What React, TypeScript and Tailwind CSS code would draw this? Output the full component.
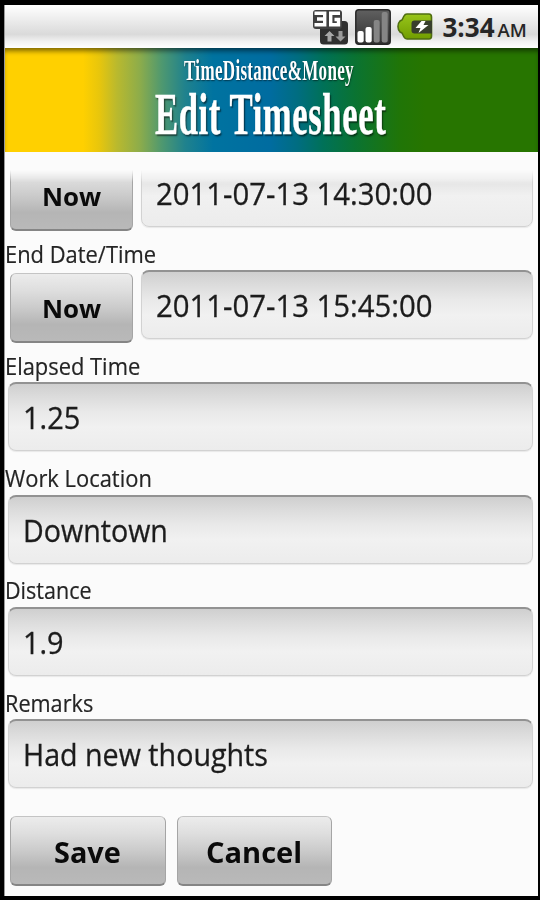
import { useLayoutEffect, useRef, useState } from "react";

/** Text squeezed horizontally so that it takes exactly `width` pixels. */
function Fit({ text, width, className = "" }: { text: string; width: number; className?: string }) {
  const ref = useRef<HTMLSpanElement>(null);
  const [scale, setScale] = useState(1);
  useLayoutEffect(() => {
    const el = ref.current;
    if (el) setScale(width / el.offsetWidth);
  }, [text, width]);
  return (
    <span className="block text-left" style={{ width }}>
      <span
        ref={ref}
        className={`inline-block origin-left whitespace-nowrap align-top ${className}`}
        style={{ transform: `scaleX(${scale})` }}
      >
        {text}
      </span>
    </span>
  );
}

function Field({ value, width }: { value: string; width: number }) {
  return (
    <div className="h-[69px] flex-1 rounded-[8px] border border-t-2 border-[#d2d2d2] border-t-[#929292] bg-[linear-gradient(#cfcfcf,#dcdcdc_20%,#e9e9e9_42%,#f1f1f1_65%,#ececec)] pl-[13.5px] shadow-[0_1px_1px_#e8e8e8]">
      <Fit text={value} width={width} className="text-[31px] leading-[67px] text-[#1c1c1c] [-webkit-text-stroke:0.3px_#1c1c1c]" />
    </div>
  );
}

function Button({ label, width, big = false }: { label: string; width: number; big?: boolean }) {
  return (
    <button
      className={`flex h-[70.5px] shrink-0 justify-center rounded-[6px] border border-b-2 border-[#a5a5a5] border-t-[#c4c4c4] border-b-[#858585] bg-[linear-gradient(#ececec,#dedede_25%,#cbcbcb_50%,#b5b5b5_75%,#b9b9b9)] font-bold text-[#0a0a0a] ${
        big ? "w-[155.5px]" : "w-[122.5px]"
      }`}
    >
      <Fit text={label} width={width} className={big ? "text-[28px] leading-[70px]" : "text-[25px] leading-[68px]"} />
    </button>
  );
}

function Label({ text, width }: { text: string; width: number }) {
  return (
    <div className="h-[31.5px]">
      <Fit text={text} width={width} className="text-[24px] leading-[30px] text-[#242424] [-webkit-text-stroke:0.2px_#242424]" />
    </div>
  );
}

function NetworkIcon() {
  return (
    <svg width="36" height="38" viewBox="0 0 36 38">
      <rect x="7" y="12" width="28" height="23.500" rx="3.500" fill="#303030" />
      <rect x="0" y="1" width="29" height="19" rx="3" fill="#404040" />
      <path d="M1.500 4.200H11.700V15.800H1.500M4 10H11" fill="none" stroke="#fff" strokeWidth="3.400" />
      <path d="M27 4.200H17.700V15.800H25.500V10.500H21.500" fill="none" stroke="#fff" strokeWidth="3.400" />
      <path d="M16.500 22l5 5h-3v5.500h-4V27h-3z" fill="#a8a8a8" />
      <path d="M27.500 32.500l5-5h-3V22h-4v5.500h-3z" fill="#989898" />
    </svg>
  );
}

function SignalIcon() {
  return (
    <svg width="36" height="36" viewBox="0 0 36 36">
      <defs>
        <linearGradient id="sig" x1="0" y1="0" x2="0" y2="1">
          <stop offset="0" stopColor="#606060" />
          <stop offset="1" stopColor="#303030" />
        </linearGradient>
      </defs>
      <rect x=".8" y=".8" width="34.400" height="34.400" rx="3" fill="url(#sig)" stroke="#292929" strokeWidth="1.500" />
      <rect x="2.500" y="22" width="6.200" height="11.500" rx="2" fill="#fff" />
      <rect x="10.500" y="18" width="6.200" height="15.500" rx="2" fill="#fff" />
      <rect x="18.700" y="11" width="6" height="22.500" rx="2" fill="#858585" />
      <rect x="26.700" y="3" width="6" height="30.500" rx="2" fill="#858585" />
    </svg>
  );
}

function BatteryIcon() {
  return (
    <svg width="36" height="28" viewBox="0 0 36 28">
      <defs>
        <linearGradient id="bat" x1="0" y1="0" x2="0" y2="1">
          <stop offset="0" stopColor="#98c51b" />
          <stop offset="1" stopColor="#719d00" />
        </linearGradient>
      </defs>
      <path
        d="M10 1h22q2.500 0 2.500 3v19q0 3-2.500 3H10q-2 0-3-2l-2-4-2-1q-2-2-2-5.500T3 8l2-1 2-4q1-2 3-2z"
        fill="url(#bat)"
        stroke="#4f6d10"
        strokeWidth="1.600"
      />
      <path d="M17.500 7.500H35v13H17.500q-3 0-3-3v-7q0-3 3-3z" fill="#383f2c" />
      <path d="M24.500 8h4l-2 4h5l-10 8 2-5h-5z" fill="#fff" />
    </svg>
  );
}

export default function App() {
  return (
    <div className="h-[900px] w-[540px] overflow-hidden bg-black pt-[5px] pl-1 font-['Open_Sans','Noto_Sans',sans-serif]">
      <div className="h-[891px] w-[533.5px] overflow-hidden border-l border-[#9a9a9a] bg-[#fbfbfb]">
        <div className="flex h-[43px] items-start bg-[linear-gradient(#fff,#ececec_35%,#dadada_68%,#f2f2f2_85%,#fff)] pl-[308px]">
          <div className="mt-[4px]"><NetworkIcon /></div>
          <div className="mt-[4px] ml-[6px]"><SignalIcon /></div>
          <div className="mt-[8px] ml-[6px]"><BatteryIcon /></div>
          <div className="ml-[9.5px] flex font-bold text-[#262626]">
            <Fit text="3:34" width={52} className="text-[26px] leading-[44px]" />
            <span className="ml-[3px]"><Fit text="AM" width={29} className="text-[18.5px] font-semibold leading-[50px]" /></span>
          </div>
        </div>

        <div className="h-[103.5px] bg-[linear-gradient(90deg,#ffd000_0,#ffd000_78px,#e8c60c_94px,#b9b92e_112px,#8cac4b_135px,#4e9870_157px,#20828d_180px,#0073a0_208px,#006ca0_265px,#006d80_293px,#007158_318px,#0a7332_350px,#207507_395px,#277500_420px)] font-['Liberation_Serif',serif] font-bold text-white shadow-[inset_0_5px_5px_-2px_rgba(0,0,0,0.5)]">
          <div className="h-[38px] pl-[179px] pt-[7px]">
            <Fit text="TimeDistance&Money" width={170} className="text-[29px] leading-[31px] tracking-[0.5px] [text-shadow:1px_1px_2px_rgba(0,0,0,0.5)]" />
          </div>
          <div className="pl-[150px] pt-px">
            <Fit text="Edit Timesheet" width={231.5} className="text-[59px] leading-[54px] tracking-[1px] [-webkit-text-stroke:0.5px_white] [text-shadow:2px_2px_2px_rgba(0,0,0,0.55)]" />
          </div>
        </div>

        <div className="mt-[18px] flex h-[61.500px] items-end overflow-hidden [mask-image:linear-gradient(transparent,black_12px)]">
          <div className="flex w-full items-start pl-[5px] pr-[4.500px]">
            <div className="mt-[3px]"><Button label="Now" width={59} /></div>
            <div className="ml-[8.5px] flex h-[69px] flex-1 bg-[#fbfbfb]">
              <div className="flex h-[69px] flex-1 rounded-[8px] border border-[#d2d2d2] bg-[linear-gradient(#ececec_30%,#e7e7e7_38%,#f1f1f1_55%,#ececec)] pt-px pl-[13.5px] shadow-[0_1px_1px_#e8e8e8]">
                <Fit
                  text="2011-07-13 14:30:00"
                  width={276}
                  className="text-[31px] leading-[67px] text-[#1c1c1c] [-webkit-text-stroke:0.3px_#1c1c1c]"
                />
              </div>
            </div>
          </div>
        </div>

        <div className="mt-[7.500px]">
          <Label text="End Date/Time" width={151.5} />
          <div className="flex h-[80.750px] items-start pl-[5px] pr-[4.500px]">
            <div className="mt-[2.500px]"><Button label="Now" width={59} /></div>
            <div className="ml-[8.5px] flex flex-1"><Field value="2011-07-13 15:45:00" width={276} /></div>
          </div>
          {[
            { label: "Elapsed Time", lw: 135, value: "1.25", vw: 57 },
            { label: "Work Location", lw: 147, value: "Downtown", vw: 145 },
            { label: "Distance", lw: 87, value: "1.9", vw: 41 },
            { label: "Remarks", lw: 88.5, value: "Had new thoughts", vw: 245 },
          ].map((f) => (
            <div key={f.label}>
              <Label text={f.label} width={f.lw} />
              <div className="flex h-[80.750px] items-start pl-[3px] pr-[4.500px]">
                <Field value={f.value} width={f.vw} />
              </div>
            </div>
          ))}
        </div>

        <div className="mt-[16px] flex gap-[11px] pl-[5px]">
          <Button label="Save" width={67} big />
          <Button label="Cancel" width={96.5} big />
        </div>
      </div>
    </div>
  );
}
